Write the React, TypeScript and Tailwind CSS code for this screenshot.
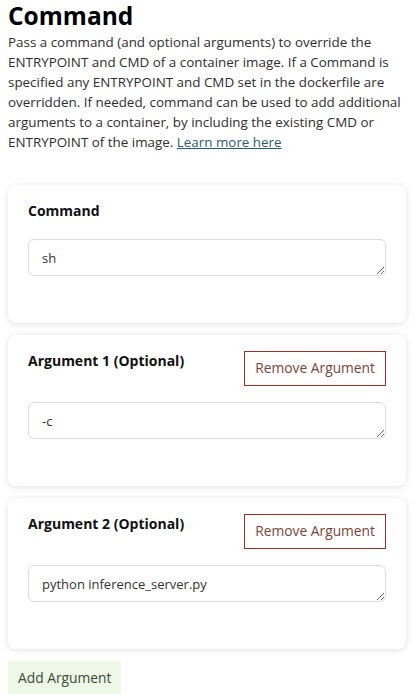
import { useState } from 'react';

const Field = ({
  label,
  value,
  removable,
}: {
  label: string;
  value: string;
  removable?: boolean;
}) => {
  return (
    <div className="bg-white rounded-lg shadow-[0_1px_6px_rgba(0,0,0,0.12)] px-5 pt-4 pb-[47px]">
      <div className="flex justify-between items-start">
        <label className="text-[14px] leading-5 font-bold text-[#111]">{label}</label>
        {removable && (
          <button className="h-[35px] px-[10px] border border-[#9b2f2f] text-[13.8px] text-[#7a4438] bg-white">
            Remove Argument
          </button>
        )}
      </div>
      <textarea
        defaultValue={value}
        rows={1}
        className={`block w-full h-[37px] border border-[#d9dce1] rounded-md pl-[13px] pr-3 py-[8px] text-[13px] leading-5 text-[#333] ${
          removable ? 'mt-[16px]' : 'mt-[18px]'
        }`}
      />
    </div>
  );
};

export default function App() {
  const [args] = useState(['-c', 'python inference_server.py']);

  return (
    <div className="bg-white min-h-screen px-2 pb-4 font-['Open_Sans',sans-serif] text-[#333]">
      <h1 className="text-[24.5px] leading-[30px] font-bold text-black pt-[1px]">Command</h1>
      <p className="text-[13.4px] leading-5 mt-[1px] text-[#2e2e2e]">
        Pass a command (and optional arguments) to override the ENTRYPOINT and CMD of a container
        image. If a Command is specified any ENTRYPOINT and CMD set in the dockerfile are
        overridden. If needed, command can be used to add additional arguments to a container, by
        including the existing CMD or ENTRYPOINT of the image.{' '}
        <a href="#" className="underline text-[#2c5d6e]">
          Learn more here
        </a>
      </p>

      <div className="mt-[33px] flex flex-col gap-3">
        <Field label="Command" value="sh" />
        {args.map((a, i) => (
          <Field key={i} label={`Argument ${i + 1} (Optional)`} value={a} removable />
        ))}
      </div>

      <button className="mt-[12px] h-[35px] px-[10px] bg-[#eef8e6] text-[13.8px] text-[#3b4a38]">
        Add Argument
      </button>
    </div>
  );
}
